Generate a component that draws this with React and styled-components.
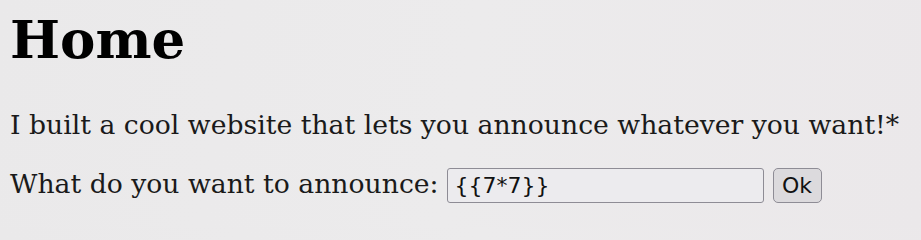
import React from "react";
import styled, { createGlobalStyle } from "styled-components";

const Global = createGlobalStyle`
  html, body { margin: 0; padding: 0; }
  body {
    background: linear-gradient(100deg, #eae9ea 0%, #ecebec 50%, #ebe8ea 100%);
    min-height: 228px;
    font-family: "DejaVu Serif", serif;
    color: #111;
  }
`;

const Page = styled.main`
  padding: 0 10px;
  display: flex;
  flex-direction: column;
`;

const Title = styled.h1`
  font-size: 53px;
  font-weight: bold;
  margin: 9px 0 0;
  line-height: 60px;
  color: #000;
`;

const Text = styled.p`
  font-size: 26.67px;
  margin: 40px 0 0;
  line-height: 31px;
  color: #1a1a1a;
`;

const Form = styled.form`
  display: flex;
  align-items: flex-start;
  margin-top: 28px;
  font-size: 26.67px;
  line-height: 31px;
  color: #1a1a1a;
`;

const Label = styled.label`
  margin-right: 8px;
`;

const Input = styled.input`
  font-family: "DejaVu Sans", sans-serif;
  font-size: 22px;
  width: 317px;
  height: 35px;
  box-sizing: border-box;
  border: 1.5px solid #8e8c95;
  border-radius: 3px;
  background: #ecebee;
  color: #111;
  padding: 0 7px;
  margin: 0;
`;

const Button = styled.button`
  font-family: "DejaVu Sans", sans-serif;
  font-size: 22px;
  width: 49px;
  height: 35px;
  box-sizing: border-box;
  margin-left: 9px;
  padding: 0;
  border: 1.5px solid #8e8c95;
  border-radius: 5px;
  background: #dcdadd;
  color: #111;
`;

export default function App() {
  return (
    <>
      <Global />
      <Page>
        <Title>Home</Title>
        <Text>I built a cool website that lets you announce whatever you want!*</Text>
        <Form onSubmit={(e) => e.preventDefault()}>
          <Label htmlFor="announce">What do you want to announce:</Label>
          <Input id="announce" defaultValue="{{7*7}}" />
          <Button type="submit">Ok</Button>
        </Form>
      </Page>
    </>
  );
}
